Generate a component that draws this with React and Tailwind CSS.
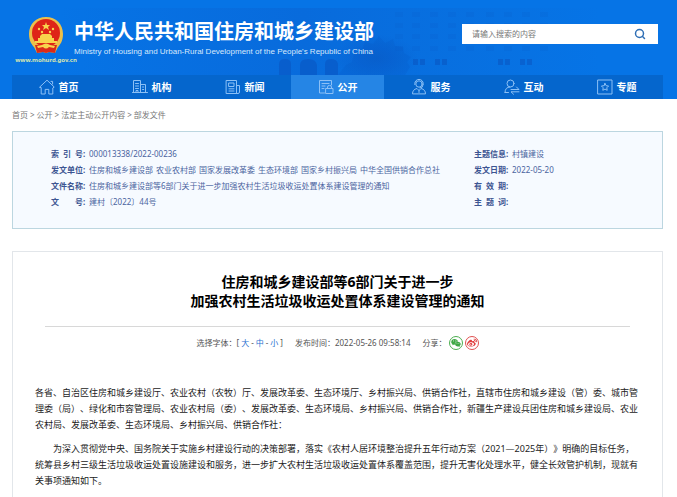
import { FaWeibo, FaWeixin } from "react-icons/fa6";
import { FiSearch } from "react-icons/fi";

const NAV = [
  { label: "首页", icon: HomeIcon },
  { label: "机构", icon: OfficeIcon },
  { label: "新闻", icon: NewsIcon },
  { label: "公开", icon: OpenIcon, active: true },
  { label: "服务", icon: ServiceIcon },
  { label: "互动", icon: InteractIcon },
  { label: "专题", icon: TopicIcon },
];

const CRUMBS = ["首页", "公开", "法定主动公开内容", "部发文件"];

const DEPARTMENTS = [
  "住房和城乡建设部",
  "农业农村部",
  "国家发展改革委",
  "生态环境部",
  "国家乡村振兴局",
  "中华全国供销合作总社",
];

function App() {
  return (
    <div className="flex min-h-screen flex-col bg-white font-['Noto_Sans','Noto_Sans_CJK_SC',sans-serif] text-[8px] leading-4 text-[#555]">
      <Header />
      <main className="flex flex-1 flex-col pr-3.5 pl-3">
        <nav aria-label="位置" className="flex gap-0.5 py-2 text-[#777]">
          {CRUMBS.map((crumb, i) => (
            <span key={crumb} className="flex gap-0.5">
              {i > 0 && <span>&gt;</span>}
              <a href="#">{crumb}</a>
            </span>
          ))}
        </nav>
        <DocumentInfo />
        <Article />
      </main>
    </div>
  );
}

function Header() {
  return (
    <header className="relative bg-[#0674e6]">
      <Building />
      <div className="relative flex h-[75px] items-start justify-between pr-[19px] pl-[18px]">
        <div className="flex">
          <div className="flex w-14 flex-col items-center pt-4">
            <Emblem />
            <a
              href="#"
              className="font-['Noto_Sans','Noto_Sans_CJK_SC',sans-serif] text-[6px] leading-3 font-bold text-[#d8e6ae]"
            >
              www.mohurd.gov.cn
            </a>
          </div>
          <div className="pt-5 text-white">
            <h1 className="text-[20px] leading-6 font-bold whitespace-nowrap">
              中华人民共和国住房和城乡建设部
            </h1>
            <p className="font-['Liberation_Sans','Noto_Sans_CJK_SC',sans-serif] text-[8px] leading-4 whitespace-nowrap text-[#d6e8fc]">
              Ministry of Housing and Urban-Rural Development of the People's
              Republic of China
            </p>
          </div>
        </div>
        <form className="mt-6 flex h-5 w-49 items-center bg-white pr-3 pl-2.5">
          <input
            type="text"
            aria-label="搜索"
            placeholder="请输入搜索的内容"
            className="min-w-0 flex-1 text-[8px] leading-4 outline-none placeholder:text-[#777]"
          />
          <button type="submit" aria-label="搜索" className="text-[#2f6fb5]">
            <FiSearch className="size-3" strokeWidth={3} />
          </button>
        </form>
      </div>
      <nav className="relative mr-3.5 ml-3 flex bg-[#0566cd]">
        {NAV.map(({ label, icon: Icon, active }) => (
          <a
            key={label}
            href="#"
            className={`flex h-6 flex-1 items-center justify-center gap-1 text-[10px] font-bold text-white ${
              active ? "bg-[#2585e5]" : ""
            }`}
          >
            <Icon />
            {label}
          </a>
        ))}
      </nav>
    </header>
  );
}

function DocumentInfo() {
  return (
    <section className="grid grid-cols-[423px_1fr] border border-[#bcd6e0] bg-[#f6faff] pt-3.5 pb-[18px] pl-[38px] text-[#4a64a0]">
      <dl>
        <InfoRow label="索 引 号">000013338/2022-00236</InfoRow>
        <InfoRow label="发文单位">
          <span className="flex gap-[3px]">
            {DEPARTMENTS.map((name) => (
              <span key={name}>{name}</span>
            ))}
          </span>
        </InfoRow>
        <InfoRow label="文件名称">
          住房和城乡建设部等6部门关于进一步加强农村生活垃圾收运处置体系建设管理的通知
        </InfoRow>
        <InfoRow label="文 号">建村〔2022〕44号</InfoRow>
      </dl>
      <dl>
        <InfoRow label="主题信息">村镇建设</InfoRow>
        <InfoRow label="发文日期">2022-05-20</InfoRow>
        <InfoRow label="有 效 期" />
        <InfoRow label="主 题 词" />
      </dl>
    </section>
  );
}

function InfoRow({ label, children }) {
  return (
    <div className="flex whitespace-nowrap">
      <dt className="flex w-[38px] font-bold text-[#3d5592]">
        <span className="flex w-8 justify-between">
          {label.split(" ").map((part) => (
            <span key={part}>{part}</span>
          ))}
        </span>
        :
      </dt>
      <dd>{children}</dd>
    </div>
  );
}

function Article() {
  return (
    <article className="mt-[22px] flex-1 border border-b-0 border-[#e2e6ea] px-8 pt-5 pb-1">
      <h2 className="border-b border-[#d8d8d8] pb-4 text-center text-[14px] leading-[19px] font-bold text-black">
        住房和城乡建设部等6部门关于进一步
        <br />
        加强农村生活垃圾收运处置体系建设管理的通知
      </h2>
      <div className="mt-2 flex items-center justify-center gap-3">
        <p>
          选择字体：[
          <button type="button" className="px-0.5 text-[#2a6fd0]">
            大
          </button>
          -
          <button type="button" className="px-0.5 text-[#2a6fd0]">
            中
          </button>
          -
          <button type="button" className="px-0.5 text-[#2a6fd0]">
            小
          </button>
          ]
        </p>
        <p>发布时间：2022-05-26 09:58:14</p>
        <div className="flex items-center gap-0.5">
          <span>分享：</span>
          <a
            href="#"
            aria-label="微信"
            className="flex size-3.5 items-center justify-center rounded-full border border-[#4caf50] text-[#3fa845]"
          >
            <FaWeixin className="size-2.5" />
          </a>
          <a
            href="#"
            aria-label="微博"
            className="flex size-3.5 items-center justify-center rounded-full border border-[#e0504f] text-[#e03c3c]"
          >
            <FaWeibo className="size-2.5" />
          </a>
        </div>
      </div>
      <div className="-mx-2.5 mt-[34px] space-y-2 text-[9px] text-[#222] [text-spacing-trim:space-all]">
        <p>
          各省、自治区住房和城乡建设厅、农业农村（农牧）厅、发展改革委、生态环境厅、乡村振兴局、供销合作社，直辖市住房和城乡建设（管）委、城市管理委（局）、绿化和市容管理局、农业农村局（委）、发展改革委、生态环境局、乡村振兴局、供销合作社，新疆生产建设兵团住房和城乡建设局、农业农村局、发展改革委、生态环境局、乡村振兴局、供销合作社：
        </p>
        <p className="indent-[2em]">
          为深入贯彻党中央、国务院关于实施乡村建设行动的决策部署，落实《农村人居环境整治提升五年行动方案（2021—2025年）》明确的目标任务，统筹县乡村三级生活垃圾收运处置设施建设和服务，进一步扩大农村生活垃圾收运处置体系覆盖范围，提升无害化处理水平，健全长效管护机制，现就有关事项通知如下。
        </p>
      </div>
    </article>
  );
}

/* Faded ministry building behind the header */
function Building() {
  const floors = [12, 23, 34, 46];
  const columns = [395, 412, 430, 448, 466, 486, 504, 522, 540];
  return (
    <svg
      aria-hidden="true"
      viewBox="0 0 677 75"
      preserveAspectRatio="xMidYMin slice"
      className="absolute inset-x-0 top-0 h-[75px] w-full"
    >
      <defs>
        <linearGradient id="haze">
          <stop offset="0" stopColor="#0a5fd0" stopOpacity="0" />
          <stop offset="0.45" stopColor="#0a62d2" stopOpacity="0.5" />
          <stop offset="0.75" stopColor="#0a6ad8" stopOpacity="0.4" />
          <stop offset="1" stopColor="#0a6ad8" stopOpacity="0" />
        </linearGradient>
        <radialGradient id="tree">
          <stop offset="0" stopColor="#0a50bc" stopOpacity="0.4" />
          <stop offset="1" stopColor="#0a50bc" stopOpacity="0" />
        </radialGradient>
      </defs>
      <rect x="60" y="8" width="540" height="67" fill="url(#haze)" />
      <g fill="#0a5cc8" opacity="0.16">
        {floors.map((y) =>
          columns.map((x) => (
            <rect key={`${x}-${y}`} x={x} y={y} width="8" height="5" />
          ))
        )}
      </g>
      <g fill="#0a4fba" opacity="0.45">
        <path d="M279 75V64q0-5 6-5t6 5v11zM300 75V65q0-6 8-6t9 6v10zM325 75V64q0-5 6-5t7 5v11z" />
        <path d="M413 59h5v6h-5zM420 59h5v6h-5zM435 59h5v6h-5zM442 59h5v6h-5zM498 59h5v6h-5zM505 59h5v6h-5zM520 59h5v6h-5zM527 59h5v6h-5z" />
      </g>
      <ellipse cx="376" cy="58" rx="42" ry="24" fill="url(#tree)" />
      <path
        d="M338 75l8-10 6-3 2-9 8-3 3-8 8 2 6-8 6 7 8-4 2 7 8 1 1 6 7 4-4 5 3 5-5 8z"
        fill="#0a50bc"
        opacity="0.15"
      />
    </svg>
  );
}

function Emblem() {
  return (
    <svg viewBox="0 0 36 38" className="h-[38px] w-9" aria-hidden="true">
      <path
        d="M18 1C8 1 1 8 1 18c0 7 3 11 5 13l3 6 6-1 3 1 3-1 6 1 3-6c2-2 5-6 5-13C35 8 28 1 18 1z"
        fill="#ecc04a"
      />
      <circle cx="18" cy="17" r="14" fill="#de2418" />
      <path d="M7 29h22l-2 8-6-1-3 1-3-1-6 1z" fill="#d92a1a" />
      <g fill="#f8d44c">
        <path d="M18 6l1 3h3l-2 2 1 3-3-2-3 2 1-3-2-2h3z" />
        <circle cx="11" cy="13" r="1.2" />
        <circle cx="14" cy="16" r="1.2" />
        <circle cx="22" cy="16" r="1.2" />
        <circle cx="25" cy="13" r="1.2" />
        <path d="M12 20l2-2h8l2 2v2h2v3H10v-3h2z" />
        <path d="M7 25h22v2H7z" />
        <path d="M14 29q4-3 8 0l5 1-1 2-5-1q-3 3-6 0l-5 1-1-2z" />
      </g>
    </svg>
  );
}

function NavSvg({ children }) {
  return (
    <svg
      viewBox="0 0 16 16"
      fill="none"
      stroke="#8cc0f6"
      strokeLinecap="round"
      strokeLinejoin="round"
      className="size-4"
      aria-hidden="true"
    >
      {children}
    </svg>
  );
}

function HomeIcon() {
  return (
    <NavSvg>
      <path d="M.8 8L8 1.2 15.2 8l-1.4 1V15H9.8v-4.6H6.2V15H2.2V9zM12 2.4h1.6V5" />
    </NavSvg>
  );
}

function OfficeIcon() {
  return (
    <NavSvg>
      <path d="M1.5 13.5v-12h7v12M8.5 5.5h5v8M.5 13.5h15M3.5 4.5h3M3.5 7h3M3.5 9.5h3M10.5 8h1.2M10.5 10.5h1.2M4 13.5v-2h2v2" />
    </NavSvg>
  );
}

function NewsIcon() {
  return (
    <NavSvg>
      <path d="M1.5 1.5h10v13h-10zM11.5 6.5h3v6.5q0 1.5-1.5 1.5h-1.5M4 4h5v3.5H4zM4 9.8h5M4 12h5" />
    </NavSvg>
  );
}

function OpenIcon() {
  return (
    <NavSvg>
      <path d="M6.5 14H1.5V1.5h12V6M4 4.5h7M4 7h3M4 9.5h2M8 9.5h7v5H8zM9.5 9.5V8q0-1.6 2-1.6t2 1.6v1.5" />
    </NavSvg>
  );
}

function ServiceIcon() {
  return (
    <NavSvg>
      <circle cx="8" cy="5" r="3.2" />
      <path d="M3.8 5.5V4.6a4.2 4.2 0 018.4 0v.9M12 6q0 3-3 3M1.5 14.5q0-4 4.5-5l2 2 2-2q4.5 1 4.5 5zM8 11.5v2" />
    </NavSvg>
  );
}

function InteractIcon() {
  return (
    <NavSvg>
      <circle cx="6.5" cy="4.5" r="3.5" />
      <path d="M1 13.5q0-5.5 5-5.5M1 13.5h3.5M7 10.5h8l-2.5-2.5M15 12.8H7l2.5 2.4" />
    </NavSvg>
  );
}

function TopicIcon() {
  return (
    <NavSvg>
      <path d="M1 1h14v14H1zM8 4.4l1.1 2.3 2.5.3-1.8 1.8.4 2.5L8 10.1l-2.2 1.2.4-2.5L4.4 7l2.5-.3z" />
    </NavSvg>
  );
}

export default App;
